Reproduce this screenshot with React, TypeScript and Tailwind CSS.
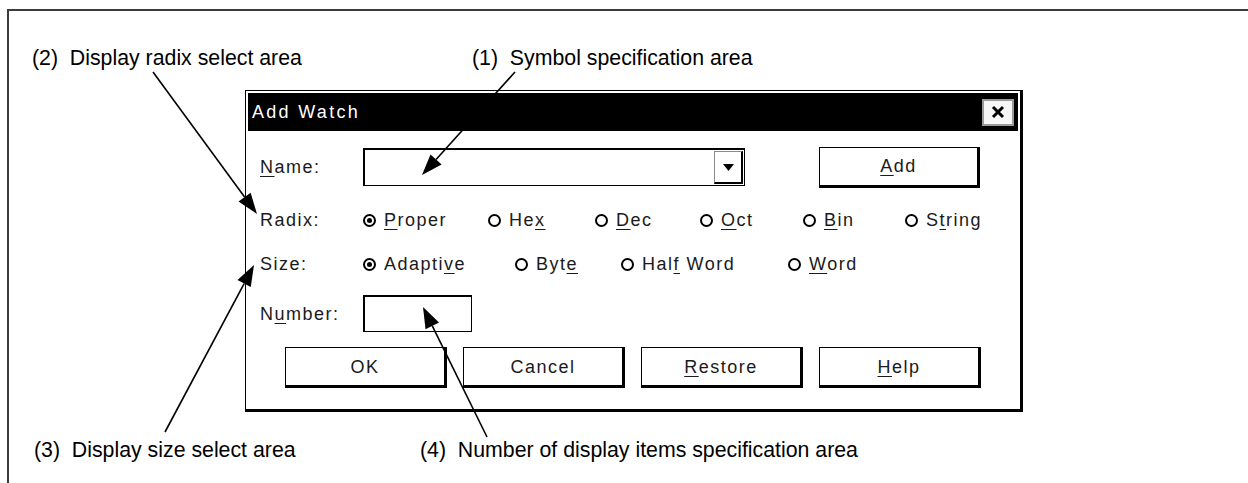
import React from 'react';

type Pt = [number, number];

// annotation arrows drawn over the whole picture (page coords)
const arrows: { from: Pt; to: Pt }[] = [
  { from: [153, 72], to: [257, 214] },
  { from: [515, 72], to: [422, 175] },
  { from: [165, 432], to: [254, 265] },
  { from: [487, 437], to: [423, 307] },
];

function Arrow({ from, to }: { from: Pt; to: Pt }) {
  const [sx, sy] = from;
  const [tx, ty] = to;
  const len = Math.hypot(tx - sx, ty - sy);
  const ux = (tx - sx) / len;
  const uy = (ty - sy) / len;
  const L = 21;
  const W = 15;
  const bx = tx - ux * L;
  const by = ty - uy * L;
  const nx = -uy * (W / 2);
  const ny = ux * (W / 2);
  return (
    <g>
      <line x1={sx} y1={sy} x2={bx} y2={by} stroke="#000" strokeWidth={1.6} />
      <polygon points={`${tx},${ty} ${bx + nx},${by + ny} ${bx - nx},${by - ny}`} fill="#000" />
    </g>
  );
}

const U = ({ children }: { children: React.ReactNode }) => (
  <span className="underline underline-offset-[3px] decoration-1">{children}</span>
);

function Radio({ checked }: { checked?: boolean }) {
  return (
    <span className="w-[13px] h-[13px] rounded-full border-2 border-black flex items-center justify-center shrink-0">
      {checked && <span className="w-[5px] h-[5px] rounded-full bg-black" />}
    </span>
  );
}

function Option({ w, checked, children }: { w: string; checked?: boolean; children: React.ReactNode }) {
  return (
    <div className={`flex items-center gap-[8px] ${w}`}>
      <Radio checked={checked} />
      <span>{children}</span>
    </div>
  );
}

function Btn({ children }: { children: React.ReactNode }) {
  return (
    <div className="w-[162px] h-[41px] border-t border-l border-black border-r-[3px] border-b-[3px] flex items-center justify-center bg-white">
      {children}
    </div>
  );
}

export default function App() {
  return (
    <div className="relative w-[1248px] h-[483px] bg-white overflow-hidden font-['Liberation_Sans',Arial,sans-serif] pt-[9px] pl-[7px]">
      <div className="h-full border-t-2 border-l-2 border-[#3c3c3c] flex flex-col">
        {/* top captions */}
        <div className="mt-[36px] h-[24px] flex items-center text-[21.3px] text-black leading-none whitespace-pre pl-[23px]">
          <span className="w-[440px]">(2)  Display radix select area</span>
          <span>(1)  Symbol specification area</span>
        </div>

        {/* Add Watch dialog */}
        <div className="ml-[236px] mt-[19px] w-[778px] h-[322px] bg-white border-t border-l border-black border-r-[3px] border-b-[3px] p-[2px] flex flex-col text-[18px] tracking-[1.5px] text-[#1a1a1a] leading-none">
          <div className="h-[38px] bg-black flex items-center justify-between pl-[4px] pr-[4px]">
            <span className="text-white tracking-[2.3px]">Add Watch</span>
            <div className="w-[32px] h-[27px] bg-[#f6f6f6] border-2 border-[#9a9a9a] flex items-center justify-center">
              <svg width="14" height="14" viewBox="0 0 14 14">
                <path d="M2 2 L12 12 M12 2 L2 12" stroke="#000" strokeWidth="3" />
              </svg>
            </div>
          </div>

          <div className="flex-1 pl-[12px] pt-[17px] flex flex-col">
            {/* Name */}
            <div className="h-[38px] flex items-center">
              <span className="w-[103px]"><U>N</U>ame:</span>
              <div className="w-[382px] h-[38px] border-t-2 border-l-2 border-r border-b border-black flex justify-end items-stretch p-[1px]">
                <div className="w-[29px] border-t border-l border-[#8a8a8a] border-r-2 border-b-2 border-r-black border-b-black flex items-center justify-center bg-white">
                  <svg width="11" height="7" viewBox="0 0 11 7">
                    <path d="M0 0 H11 L5.5 7 Z" fill="#000" />
                  </svg>
                </div>
              </div>
              <div className="ml-[74px] w-[161px] h-[41px] border-t border-l border-black border-r-[3px] border-b-[3px] flex items-center justify-center">
                <span><U>A</U>dd</span>
              </div>
            </div>

            {/* Radix */}
            <div className="mt-[19px] h-[30px] flex items-center">
              <span className="w-[103px]">Radix:</span>
              <Option w="w-[125px]" checked><U>P</U>roper</Option>
              <Option w="w-[107px]">He<U>x</U></Option>
              <Option w="w-[105px]"><U>D</U>ec</Option>
              <Option w="w-[103px]"><U>O</U>ct</Option>
              <Option w="w-[102px]"><U>B</U>in</Option>
              <Option w="w-[100px]">S<U>t</U>ring</Option>
            </div>

            {/* Size */}
            <div className="mt-[14px] h-[30px] flex items-center">
              <span className="w-[103px]">Size:</span>
              <Option w="w-[152px]" checked>Adapti<U>v</U>e</Option>
              <Option w="w-[106px]">Byt<U>e</U></Option>
              <Option w="w-[167px]">Hal<U>f</U> Word</Option>
              <Option w="w-[100px]"><U>W</U>ord</Option>
            </div>

            {/* Number */}
            <div className="mt-[16px] h-[37px] flex items-center">
              <span className="w-[103px]">N<U>u</U>mber:</span>
              <div className="w-[109px] h-[37px] border-t-2 border-l-2 border-r border-b border-black" />
            </div>

            {/* buttons */}
            <div className="mt-[15px] ml-[25px] flex gap-[16px]">
              <Btn>OK</Btn>
              <Btn>Cancel</Btn>
              <Btn><U>R</U>estore</Btn>
              <Btn><U>H</U>elp</Btn>
            </div>
          </div>
        </div>

        {/* bottom captions */}
        <div className="mt-[27px] h-[24px] flex items-center text-[21.3px] text-black leading-none whitespace-pre pl-[25px]">
          <span className="w-[386px]">(3)  Display size select area</span>
          <span>(4)  Number of display items specification area</span>
        </div>
      </div>

      <svg className="absolute inset-0 pointer-events-none" width="1248" height="483">
        {arrows.map((a, i) => (
          <Arrow key={i} from={a.from} to={a.to} />
        ))}
      </svg>
    </div>
  );
}
